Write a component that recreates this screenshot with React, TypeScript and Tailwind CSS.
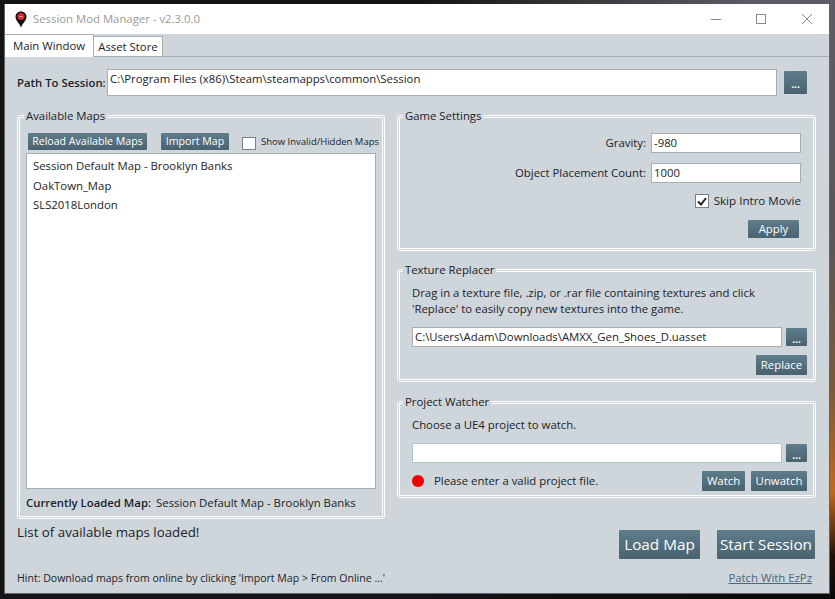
import type { ReactNode } from 'react';

const btn =
  'flex shrink-0 items-center justify-center whitespace-nowrap rounded-[1px] bg-gradient-to-b from-[#5f7d8c] to-[#4a6270] text-white';

function Group({ title, className, legend = 'ml-[4px]', children }: { title: string; className: string; legend?: string; children: ReactNode }) {
  return (
    <fieldset className={`rounded-[3px] border-[3px] border-double border-white min-w-0 ${className}`}>
      <legend className={`${legend} px-[2px] text-[11.35px] leading-[14px] text-[#1c2228]`}>{title}</legend>
      {children}
    </fieldset>
  );
}

function Browse({ className }: { className: string }) {
  return <button className={`${btn} pt-[3px] text-[10px] leading-none font-bold ${className}`}>...</button>;
}

export default function App() {
  return (
    <div className="h-[599px] w-[835px] overflow-hidden bg-[linear-gradient(to_right,#141416_0%,#141416_50%,transparent_90%),linear-gradient(to_bottom,#5c5c64_0%,#5a5658_40%,#7a5a3a_65%,#c06a1c_82%,#201008_93%,#0a0a0a_100%)] p-[4px] font-['Open_Sans',sans-serif] text-[#1c2228]">
      <div className="flex h-[590px] w-[826px] flex-col border-x border-b border-[#62666a] bg-[#ced5db]">
        {/* title bar */}
        <div className="flex h-[30px] shrink-0 items-center bg-white pl-[10px]">
          <svg width="12" height="17" viewBox="0 0 12 17">
            <path d="M6 0.5C2.8 0.5 0.5 2.8 0.5 5.8 0.5 9.5 4.5 12.5 6 16.5 7.5 12.5 11.5 9.5 11.5 5.8 11.5 2.8 9.2 0.5 6 0.5Z" fill="#111" />
            <circle cx="6" cy="5.5" r="3.6" fill="#d8252e" />
            <path d="M4.5 5.5h3" stroke="#f3b0b0" strokeWidth="1" />
          </svg>
          <span className="ml-[6px] text-[11.35px] text-[#9a9a9a]">Session Mod Manager - v2.3.0.0</span>
          <div className="ml-auto flex items-center pr-[17px] text-[#8a8a8a]">
            <svg width="10" height="10" viewBox="0 0 10 10" stroke="currentColor" fill="none">
              <path d="M0 5.5h10" />
            </svg>
            <svg width="10" height="10" viewBox="0 0 10 10" stroke="currentColor" fill="none" className="ml-[35px]">
              <rect x="0.5" y="0.5" width="9" height="9" />
            </svg>
            <svg width="10" height="10" viewBox="0 0 10 10" stroke="currentColor" fill="none" className="ml-[36px]">
              <path d="M0 0l10 10M10 0L0 10" />
            </svg>
          </div>
        </div>

        {/* tabs */}
        <div className="flex h-[23px] shrink-0 items-end border-b border-[#a9adb0]">
          <div className="mb-[-1px] flex h-[23px] w-[89px] items-center justify-center border-t border-r border-[#a9adb0] bg-white text-[11.35px]">
            Main Window
          </div>
          <div className="flex h-[20px] w-[69px] items-center justify-center border-t border-r border-[#a9adb0] bg-white text-[11.35px]">
            Asset Store
          </div>
        </div>

        {/* path row */}
        <div className="mt-[12px] flex h-[27px] shrink-0 items-center pl-[12px]">
          <span className="w-[90px] text-[11.35px] font-semibold whitespace-nowrap">Path To Session:</span>
          <div className="h-[27px] w-[670px] border border-[#a9adb0] bg-white pl-[2px] text-[11.35px] leading-[18px]">
            {'C:\\Program Files (x86)\\Steam\\steamapps\\common\\Session'}
          </div>
          <Browse className="ml-[7px] h-[23px] w-[23px]" />
        </div>

        {/* panels */}
        <div className="mt-[13px] flex shrink-0 gap-[12px] pl-[12px]">
          <Group title="Available Maps" className="h-[410px] w-[368px]">
            <div className="flex flex-col px-[6px]">
              <div className="mt-[10px] flex h-[17px] items-center">
                <button className={`${btn} ml-[2px] h-[17px] w-[119px] text-[10.6px]`}>Reload Available Maps</button>
                <button className={`${btn} ml-[14px] h-[17px] w-[68px] text-[10.6px]`}>Import Map</button>
                <div className="ml-[13px] mt-[3px] h-[13px] w-[14px] shrink-0 border border-[#7a7f84] bg-white" />
                <span className="ml-[5px] mt-[2px] text-[9.5px] whitespace-nowrap">Show Invalid/Hidden Maps</span>
              </div>
              <div className="mt-[3px] h-[336px] w-[350px] border border-[#a9adb0] bg-white pl-[6px] pt-[2px] text-[11.35px]">
                <div className="h-[19.5px] leading-[19px]">Session Default Map - Brooklyn Banks</div>
                <div className="h-[19.5px] leading-[19px]">OakTown_Map</div>
                <div className="h-[19.5px] leading-[19px]">SLS2018London</div>
              </div>
              <div className="mt-[6px] flex text-[11.35px] leading-[16px]">
                <span className="font-semibold">Currently Loaded Map:</span>
                <span className="ml-[5px]">Session Default Map - Brooklyn Banks</span>
              </div>
            </div>
          </Group>

          <div className="flex w-[419px] flex-col">
            <Group title="Game Settings" legend="ml-[3px]" className="h-[142px]">
              <div className="flex flex-col items-end pr-[12px]">
                <div className="mt-[10px] flex h-[20px] items-center">
                  <span className="mr-[5px] text-[11.35px]">Gravity:</span>
                  <div className="h-[20px] w-[150px] border border-[#a9adb0] bg-white pl-[2px] text-[11.35px] leading-[18px]">-980</div>
                </div>
                <div className="mt-[10px] flex h-[20px] items-center">
                  <span className="mr-[5px] text-[11.35px]">Object Placement Count:</span>
                  <div className="h-[20px] w-[150px] border border-[#a9adb0] bg-white pl-[2px] text-[11.35px] leading-[18px]">1000</div>
                </div>
                <div className="mt-[8px] flex h-[20px] items-center">
                  <div className="flex h-[14px] w-[14px] items-center justify-center border border-[#7a7f84] bg-white">
                    <svg width="10" height="9" viewBox="0 0 10 9" fill="none" stroke="#222" strokeWidth="2">
                      <path d="M1 4.5l3 3L9 1" />
                    </svg>
                  </div>
                  <span className="ml-[5px] text-[11.6px]">Skip Intro Movie</span>
                </div>
                <button className={`${btn} mr-[2px] mt-[9px] h-[18px] w-[51px] text-[11.35px]`}>Apply</button>
              </div>
            </Group>

            <Group title="Texture Replacer" legend="ml-[3px]" className="mt-[12px] h-[119px]">
              <div className="flex flex-col pl-[12px] pr-[6px]">
                <p className="mt-[8px] text-[11.35px] leading-[16px]">
                  Drag in a texture file, .zip, or .rar file containing textures and click
                  <br />
                  'Replace' to easily copy new textures into the game.
                </p>
                <div className="mt-[10px] flex items-center">
                  <div className="h-[20px] w-[370px] border border-[#a9adb0] bg-white pl-[2px] text-[11.35px] leading-[18px]">
                    {'C:\\Users\\Adam\\Downloads\\AMXX_Gen_Shoes_D.uasset'}
                  </div>
                  <Browse className="ml-[4px] h-[18px] w-[21px]" />
                </div>
                <button className={`${btn} ml-auto mt-[8px] h-[20px] w-[51px] text-[11.35px]`}>Replace</button>
              </div>
            </Group>

            <Group title="Project Watcher" legend="ml-[3px]" className="mt-[13px] h-[103px]">
              <div className="flex flex-col pl-[12px] pr-[6px]">
                <p className="mt-[8px] text-[11.35px] leading-[16px]">Choose a UE4 project to watch.</p>
                <div className="mt-[10px] flex items-center">
                  <div className="h-[20px] w-[370px] border border-[#b4c4c8] bg-white" />
                  <Browse className="ml-[4px] h-[18px] w-[21px]" />
                </div>
                <div className="mt-[8px] flex items-center">
                  <div className="h-[12px] w-[12px] rounded-full bg-[#f00000]" />
                  <span className="ml-[10px] text-[11.35px]">Please enter a valid project file.</span>
                  <button className={`${btn} ml-auto h-[20px] w-[43px] text-[11.35px]`}>Watch</button>
                  <button className={`${btn} ml-[6px] h-[20px] w-[56px] text-[11.35px]`}>Unwatch</button>
                </div>
              </div>
            </Group>
          </div>
        </div>

        {/* footer */}
        <div className="flex min-h-0 flex-1 pl-[12px] pr-[14px]">
          <div className="flex flex-1 flex-col">
            <span className="mt-[3px] text-[13.3px] leading-[20px]">List of available maps loaded!</span>
            <span className="mt-auto mb-[7px] text-[10.55px] leading-[16px]">
              Hint: Download maps from online by clicking 'Import Map &gt; From Online ...'
            </span>
          </div>
          <div className="flex flex-col items-end">
            <div className="mt-[11px] flex gap-[17px]">
              <button className={`${btn} h-[29px] w-[81px] text-[15.3px]`}>Load Map</button>
              <button className={`${btn} h-[29px] w-[98px] text-[15.3px]`}>Start Session</button>
            </div>
            <span className="mt-auto mb-[7px] mr-[3px] text-[11.35px] leading-[16px] text-[#4a6878] underline">Patch With EzPz</span>
          </div>
        </div>
      </div>
    </div>
  );
}
